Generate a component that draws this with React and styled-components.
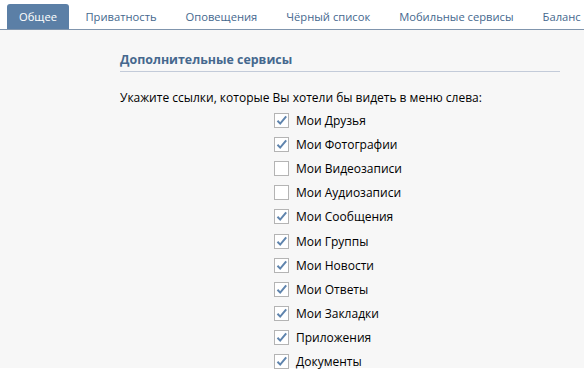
import React, { useState } from "react";
import styled, { createGlobalStyle } from "styled-components";

const GlobalStyle = createGlobalStyle`
  html, body {
    margin: 0;
    padding: 0;
    background: #ffffff;
  }
  body {
    font-family: "Open Sans", "DejaVu Sans", sans-serif;
    font-size: 12px;
    color: #000;
  }
`;

const Page = styled.div`
  width: 584px;
  height: 378px;
  overflow: hidden;
  background: #ffffff;
`;

const Tabs = styled.div`
  display: flex;
  align-items: flex-end;
  height: 30px;
  padding-left: 7px;
  border-bottom: 1px solid #8095ad;
  box-sizing: border-box;
  overflow: hidden;
`;

const Tab = styled.div`
  height: ${({ active }) => (active ? "25px" : "auto")};
  line-height: 25px;
  padding: 0 ${({ active }) => (active ? "12px" : "14.5px")};
  margin-right: ${({ active }) => (active ? "2px" : "0")};
  border-radius: 3px 3px 0 0;
  background: ${({ active }) => (active ? "#5b7fa6" : "transparent")};
  color: ${({ active }) => (active ? "#ffffff" : "#45688e")};
  font-size: 11.2px;
  white-space: nowrap;
  cursor: pointer;
`;

const Content = styled.div`
  background: #f7f7f7;
  height: 338px;
  padding: 21px 24px 0 120px;
  box-sizing: border-box;
`;

const SectionTitle = styled.div`
  font-weight: bold;
  color: #45688e;
  font-size: 12.4px;
  padding-bottom: 3px;
  border-bottom: 1px solid #c3cbd9;
  margin-bottom: 17px;
`;

const Hint = styled.div`
  font-size: 12px;
  color: #000;
  margin-bottom: 2px;
`;

const List = styled.div`
  display: flex;
  flex-direction: column;
  padding-left: 154px;
`;

const Row = styled.label`
  display: flex;
  align-items: center;
  gap: 7px;
  height: 24.2px;
  font-size: 12px;
  color: #000;
  cursor: pointer;
`;

const Box = styled.span`
  width: 13px;
  height: 13px;
  border: 1px solid #b4b4b4;
  background: #ffffff;
  display: flex;
  align-items: center;
  justify-content: center;
  flex-shrink: 0;
`;

const Check = () => (
  <svg width="13" height="13" viewBox="0 0 13 13">
    <path d="M2.5 6.8 L5.2 9.6 L11.2 2.4" fill="none" stroke="#5f84ad" strokeWidth="2" />
  </svg>
);

const tabs = ["Общее", "Приватность", "Оповещения", "Чёрный список", "Мобильные сервисы", "Баланс"];

const initial = [
  ["Мои Друзья", true],
  ["Мои Фотографии", true],
  ["Мои Видеозаписи", false],
  ["Мои Аудиозаписи", false],
  ["Мои Сообщения", true],
  ["Мои Группы", true],
  ["Мои Новости", true],
  ["Мои Ответы", true],
  ["Мои Закладки", true],
  ["Приложения", true],
  ["Документы", true],
];

const App = () => {
  const [items, setItems] = useState(initial);

  const toggle = (i) => {
    setItems((prev) => prev.map((it, j) => (j === i ? [it[0], !it[1]] : it)));
  };

  return (
    <Page>
      <GlobalStyle />
      <Tabs>
        {tabs.map((name, i) => (
          <Tab key={name} active={i === 0}>
            {name}
          </Tab>
        ))}
      </Tabs>
      <Content>
        <SectionTitle>Дополнительные сервисы</SectionTitle>
        <Hint>Укажите ссылки, которые Вы хотели бы видеть в меню слева:</Hint>
        <List>
          {items.map(([label, on], i) => (
            <Row key={label} onClick={() => toggle(i)}>
              <Box>{on && <Check />}</Box>
              {label}
            </Row>
          ))}
        </List>
      </Content>
    </Page>
  );
};

export default App;
